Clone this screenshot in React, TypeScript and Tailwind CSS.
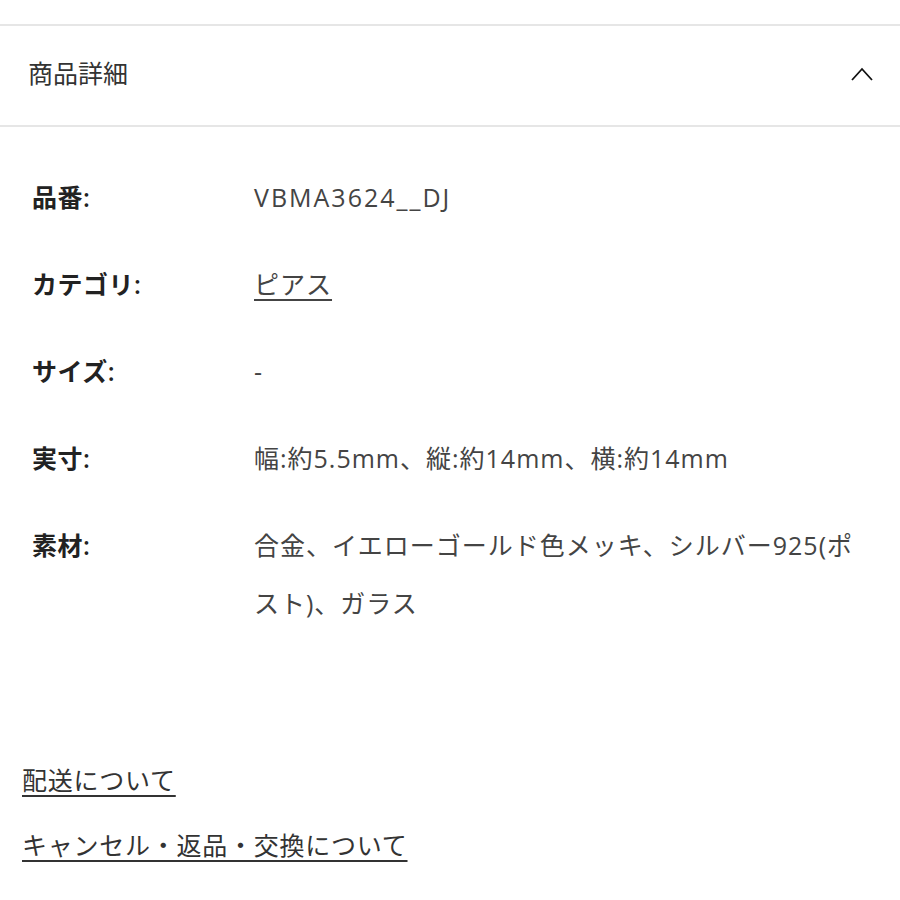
const font = { fontFamily: '"Open Sans", "Noto Sans CJK JP", sans-serif' }

const rows: { label: string; value: React.ReactNode }[] = [
  { label: "品番:", value: <span className="tracking-[0.08em]">VBMA3624__DJ</span> },
  {
    label: "カテゴリ:",
    value: (
      <a href="#" className="underline underline-offset-[5px] decoration-2">
        ピアス
      </a>
    ),
  },
  { label: "サイズ:", value: "-" },
  { label: "実寸:", value: "幅:約5.5mm、縦:約14mm、横:約14mm" },
  { label: "素材:", value: "合金、イエローゴールド色メッキ、シルバー925(ポスト)、ガラス" },
]

export default function App() {
  return (
    <div className="min-h-[900px] bg-white pt-6 text-[#222]" style={font}>
      <section className="border-y-2 border-[#e6e6e6]">
        <button className="flex h-[99px] w-full items-center justify-between pl-7 pr-[27px] pb-1">
          <span className="text-[25px] text-[#333]">商品詳細</span>
          <svg width="22" height="14" viewBox="0 0 22 14" fill="none" stroke="#111" strokeWidth="1.8">
            <polyline points="1,13 11,2 21,13" />
          </svg>
        </button>
      </section>

      <dl className="pt-[41px] pl-8">
        {rows.map((r) => (
          <div key={r.label} className="mb-[29px] flex">
            <dt className="w-[222px] shrink-0 text-[25px] font-semibold leading-[58px] tracking-[0.02em] text-[#222]">{r.label}</dt>
            <dd className="w-[622px] text-[25px] leading-[58px] tracking-[0.04em] text-[#444]">{r.value}</dd>
          </div>
        ))}
      </dl>

      <div className="mt-[130px] flex flex-col items-start gap-[29px] pl-[22px]">
        <a href="#" className="text-[25px] leading-[36px] tracking-[0.03em] text-[#333] underline underline-offset-[5px] decoration-2">
          配送について
        </a>
        <a href="#" className="text-[25px] leading-[36px] tracking-[0.03em] text-[#333] underline underline-offset-[5px] decoration-2">
          キャンセル・返品・交換について
        </a>
      </div>
    </div>
  )
}
